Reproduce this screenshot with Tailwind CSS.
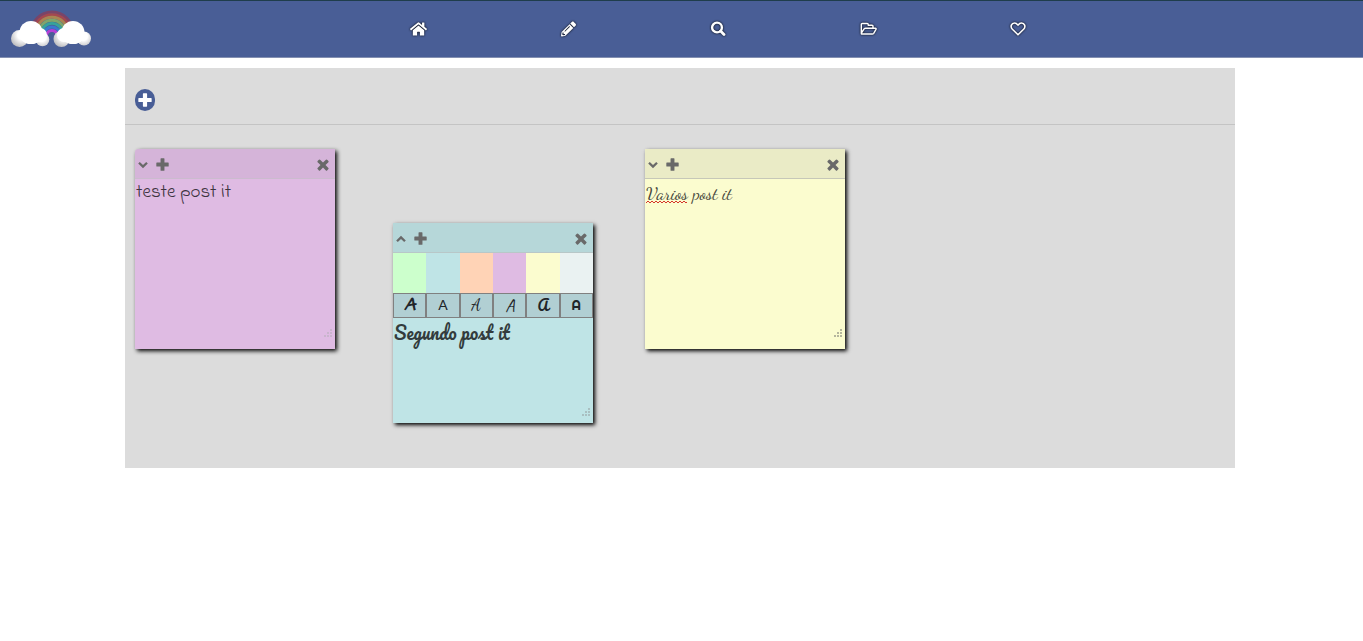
<!DOCTYPE html>
<html lang="pt-BR">
<head>
<meta charset="utf-8">
<meta name="viewport" content="width=device-width, initial-scale=1">
<title>Post it</title>
<script src="https://cdn.jsdelivr.net/npm/@tailwindcss/browser@4"></script>
</head>
<body class="bg-white font-['Roboto',sans-serif] text-[#212529]">
<svg class="hidden" aria-hidden="true">
  <symbol id="plus" viewBox="0 0 12 12"><path d="M4.700.3h2.600q.5 0 .5.500v3.400h3.400q.5 0 .5.500v2.600q0 .5-.5.500H7.800v3.400q0 .5-.5.500H4.700q-.5 0-.5-.5V7.800H.8q-.5 0-.5-.5V4.700q0-.5.500-.5h3.400V.8q0-.5.500-.5z"/></symbol>
  <symbol id="close" viewBox="0 0 12 12"><path d="M3.100.7 6 3.600 8.900.7q.6-.5 1.200 0l1.300 1.300q.5.600 0 1.200L8.500 6l2.900 2.900q.5.600 0 1.200l-1.300 1.300q-.6.500-1.200 0L6 8.500l-2.900 2.900q-.6.500-1.200 0L.6 10.100q-.5-.6 0-1.200L3.500 6 .6 3.200q-.5-.6 0-1.200L1.900.7q.6-.5 1.200 0z"/></symbol>
  <symbol id="down" viewBox="0 0 10 8"><path d="M1 1.700 5 5.600 9 1.700" fill="none" stroke="currentColor" stroke-width="2.300"/></symbol>
  <symbol id="up" viewBox="0 0 10 8"><path d="M1 6.300 5 2.400 9 6.300" fill="none" stroke="currentColor" stroke-width="2.300"/></symbol>
  <symbol id="grip" viewBox="0 0 8 8"><path d="M6 0h2v2H6zM3 3h2v2H3zM6 3h2v2H6zM0 6h2v2H0zM3 6h2v2H3zM6 6h2v2H6z"/></symbol>
</svg>

<header class="flex h-[58px] items-center border-t border-b border-t-[#1f3d4b] border-b-[#8490b1] bg-[#495e96]">
  <a href="#" aria-label="Início" class="ml-[11px] block h-10 w-20 shrink-0">
    <svg class="h-10 w-20" viewBox="0 0 80 40" aria-hidden="true">
      <defs>
        <radialGradient id="cloud" cx=".45" cy=".35" r=".65"><stop offset=".45" stop-color="#fff"/><stop offset="1" stop-color="#cfcfd2"/></radialGradient>
        <radialGradient id="puff" cx=".65" cy=".3" r=".75"><stop offset=".35" stop-color="#fff"/><stop offset="1" stop-color="#b9b9bc"/></radialGradient>
      </defs>
      <g fill="none" stroke-width="2.900">
        <path d="M20 24a21 21 0 0 1 42 0" stroke="#7a4468"/>
        <path d="M22.600 24a18.400 18.400 0 0 1 36.800 0" stroke="#a4484f"/>
        <path d="M25.200 24a15.800 15.800 0 0 1 31.600 0" stroke="#a98553"/>
        <path d="M27.800 24.500a13.200 13.200 0 0 1 26.400 0" stroke="#7fa56b"/>
        <path d="M30.400 25a10.600 10.600 0 0 1 21.200 0" stroke="#36a39b"/>
        <path d="M33 26a8 8 0 0 1 16 0" stroke="#3a78d0"/>
        <path d="M35.500 27a5.500 5.500 0 0 1 11 0" stroke="#b43fd6"/>
      </g>
      <circle cx="8.500" cy="29.500" r="8.500" fill="url(#puff)"/>
      <circle cx="31.500" cy="30.500" r="6.800" fill="url(#cloud)"/>
      <circle cx="29" cy="26" r="7" fill="#fff"/>
      <circle cx="20" cy="23.500" r="11.500" fill="#fff"/>
      <ellipse cx="20" cy="29" rx="10" ry="6" fill="#fff"/>
      <circle cx="50.500" cy="30" r="8" fill="url(#puff)"/>
      <circle cx="73" cy="29.500" r="7" fill="url(#cloud)"/>
      <circle cx="53" cy="26" r="7" fill="#fff"/>
      <circle cx="62" cy="23.500" r="11.500" fill="#fff"/>
      <ellipse cx="62" cy="29" rx="10" ry="6" fill="#fff"/>
    </svg>
  </a>
  <nav class="flex flex-1 justify-center pr-[18px] text-white" aria-label="Principal">
    <a href="#" aria-label="Casa" class="flex w-[150px] justify-center py-4"><svg class="h-4 w-[17px] drop-shadow-[0_0_1px_#000]" viewBox="0 0 576 512" fill="currentColor"><path d="M280.370 148.260L96 300.110V464a16 16 0 0 0 16 16l112.060-.29a16 16 0 0 0 15.920-16V368a16 16 0 0 1 16-16h64a16 16 0 0 1 16 16v95.640a16 16 0 0 0 16 16.050L464 480a16 16 0 0 0 16-16V300L295.670 148.260a12.190 12.190 0 0 0-15.300 0zM571.600 251.470L488 182.560V44.050a12 12 0 0 0-12-12h-56a12 12 0 0 0-12 12v72.610L318.470 43a48 48 0 0 0-61 0L4.340 251.470a12 12 0 0 0-1.600 16.900l25.500 31A12 12 0 0 0 45.150 301l235.220-193.740a12.190 12.190 0 0 1 15.300 0L530.900 301a12 12 0 0 0 16.900-1.600l25.500-31a12 12 0 0 0-1.700-16.930z"/></svg></a>
    <a href="#" aria-label="Editar" class="flex w-[150px] justify-center py-4"><svg class="h-4 w-[15px] drop-shadow-[0_0_1px_#000]" viewBox="0 0 512 512" fill="currentColor"><path d="M497.900 142.100l-46.100 46.100c-4.700 4.700-12.300 4.700-17 0l-111-111c-4.700-4.700-4.700-12.300 0-17l46.100-46.100c18.700-18.700 49.100-18.700 67.900 0l60.100 60.100c18.800 18.700 18.800 49.100 0 67.900zM284.200 99.800L21.600 362.400.4 483.900c-2.900 16.400 11.400 30.600 27.800 27.800l121.500-21.300 262.600-262.600c4.700-4.700 4.700-12.300 0-17l-111-111c-4.800-4.700-12.400-4.700-17.100 0zM124.100 339.900c-5.500-5.500-5.500-14.300 0-19.800l154-154c5.500-5.500 14.300-5.500 19.800 0s5.500 14.300 0 19.800l-154 154c-5.500 5.500-14.300 5.500-19.800 0zM88 424h48v36.300l-64.500 11.300-31.100-31.100L51.700 376H88v48z"/></svg></a>
    <a href="#" aria-label="Pesquisar" class="flex w-[150px] justify-center py-4"><svg class="size-4 drop-shadow-[0_0_1px_#000]" viewBox="0 0 16 16" fill="none" stroke="currentColor"><circle cx="7" cy="6.500" r="4.900" stroke-width="2.400"/><path d="m10.600 10.100 3.400 3.400" stroke-width="2.800" stroke-linecap="round"/></svg></a>
    <a href="#" aria-label="Pastas" class="flex w-[150px] justify-center py-4"><svg class="h-4 w-[17px] drop-shadow-[0_0_1px_#000]" viewBox="0 0 17 16" fill="none" stroke="currentColor" stroke-width="1.400" stroke-linejoin="round"><path d="M13 7V5.300q0-1-1-1H8.200V3.500q0-1-1-1H2.300q-1 0-1 1v9.200M1.400 13h10.900q.9 0 1.400-.7L16 8.400q.5-1.100-.7-1.200H5.500q-.8 0-1.400.7L1.400 12z"/></svg></a>
    <a href="#" aria-label="Favoritos" class="flex w-[150px] justify-center py-4"><svg class="size-4 drop-shadow-[0_0_1px_#000]" viewBox="0 0 16 16" fill="none" stroke="currentColor" stroke-width="1.600" stroke-linejoin="round"><path d="M8 13.800 2.400 8.300C-.1 5.600 1.400 2 4.600 2 6.500 2 7.300 3.200 8 4.100 8.700 3.200 9.500 2 11.400 2c3.200 0 4.700 3.600 2.200 6.300z"/></svg></a>
  </nav>
</header>

<main class="pt-2.5 pr-[3px]">
  <section class="relative mx-auto h-[400px] max-w-[1110px] bg-[#dcdcdc]" aria-label="Quadro">
    <div class="flex h-[57px] items-center border-b border-[#c4c4c4] px-2.5 pt-2">
      <button aria-label="Novo post it" class="flex h-[22px] w-5 items-center justify-center rounded-full bg-[#495e96] text-white"><svg class="size-3.5 fill-current"><use href="#plus"/></svg></button>
    </div>

    <article class="absolute top-[81px] left-2.5 flex h-[200px] w-[200px] flex-col rounded-tl bg-[#dfbbe3] shadow-[2px_2px_4px_#000]">
      <div class="flex h-[30px] shrink-0 items-center rounded-tl border-b border-[#cbbbce] bg-[#d5b4d9] pt-0.5 pr-1.5 pl-[3px] text-[#696969]">
        <button aria-label="Abrir opções"><svg class="h-2 w-2.5"><use href="#down"/></svg></button>
        <button aria-label="Adicionar" class="ml-2"><svg class="size-[13px] fill-current"><use href="#plus"/></svg></button>
        <button aria-label="Fechar" class="ml-auto"><svg class="size-3 fill-current"><use href="#close"/></svg></button>
      </div>
      <textarea aria-label="Nota" spellcheck="false" class="block w-full flex-1 resize-none overflow-hidden pt-0.5 pl-px font-['Indie_Flower','Lato',sans-serif] text-[19px] leading-6 text-[#3d3440] outline-none">teste post it</textarea>
      <svg class="absolute right-[3px] bottom-3 size-2 fill-[#c9b4cd]" aria-hidden="true"><use href="#grip"/></svg>
    </article>

    <article class="absolute top-[155px] left-[268px] flex h-[200px] w-[200px] flex-col bg-[#bfe4e6] shadow-[2px_2px_4px_#000]">
      <div class="flex h-[30px] shrink-0 items-center border-b border-[#b8c7c8] bg-[#b6d7d9] pt-0.5 pr-1.5 pl-[3px] text-[#696969]">
        <button aria-label="Fechar opções"><svg class="h-2 w-2.5"><use href="#up"/></svg></button>
        <button aria-label="Adicionar" class="ml-2"><svg class="size-[13px] fill-current"><use href="#plus"/></svg></button>
        <button aria-label="Fechar" class="ml-auto"><svg class="size-3 fill-current"><use href="#close"/></svg></button>
      </div>
      <div class="grid h-10 shrink-0 grid-cols-6">
        <button aria-label="Verde" class="bg-[#ccffcc]"></button>
        <button aria-label="Azul" class="bg-[#bfe4e6]"></button>
        <button aria-label="Laranja" class="bg-[#ffd3b6]"></button>
        <button aria-label="Lilás" class="bg-[#dfbbe3]"></button>
        <button aria-label="Amarelo" class="bg-[#fbfccf]"></button>
        <button aria-label="Branco" class="bg-[#eaf2f2]"></button>
      </div>
      <div class="grid h-[25px] shrink-0 grid-cols-6 bg-[#b1cfd3] text-[#212529]">
        <button class="border border-[#808080] pb-0.5 font-['Permanent_Marker','Architects_Daughter',cursive] text-[18px] leading-5 font-black italic">A</button>
        <button class="border border-[#808080] pb-0.5 font-['Lato',sans-serif] text-sm leading-5">A</button>
        <button class="border border-[#808080] pb-0.5 font-['Dancing_Script','Liberation_Serif',serif] text-base leading-5">A</button>
        <button class="border border-[#808080] pb-0.5 font-['Caveat','Open_Sans',sans-serif] text-[18px] leading-5">A</button>
        <button class="border border-[#808080] pb-0.5 font-['Pacifico','Lato',cursive] text-sm leading-5">A</button>
        <button class="border border-[#808080] pb-0.5 font-['Righteous','Roboto',sans-serif] text-sm leading-5">A</button>
      </div>
      <textarea aria-label="Nota" spellcheck="false" class="block w-full flex-1 resize-none overflow-hidden pt-[3px] pl-px font-['Pacifico','Lato',sans-serif] text-[18px] leading-6 text-[#333c3d] outline-none">Segundo post it</textarea>
      <svg class="absolute right-[3px] bottom-[7px] size-2 fill-[#a9bfc1]" aria-hidden="true"><use href="#grip"/></svg>
    </article>

    <article class="absolute top-[81px] left-[520px] flex h-[200px] w-[200px] flex-col bg-[#fbfccf] shadow-[2px_2px_4px_#000]">
      <div class="flex h-[30px] shrink-0 items-center border-b border-[#c6c7b8] bg-[#eaebc6] pt-0.5 pr-1.5 pl-[3px] text-[#696969]">
        <button aria-label="Abrir opções"><svg class="h-2 w-2.5"><use href="#down"/></svg></button>
        <button aria-label="Adicionar" class="ml-2"><svg class="size-[13px] fill-current"><use href="#plus"/></svg></button>
        <button aria-label="Fechar" class="ml-auto"><svg class="size-3 fill-current"><use href="#close"/></svg></button>
      </div>
      <textarea aria-label="Nota" spellcheck="false" class="block w-full flex-1 resize-none overflow-hidden pt-0.5 pl-px font-['Dancing_Script','Liberation_Serif',serif] text-[18px] leading-6 text-[#44453a] outline-none">Varios post it</textarea>
      <svg class="absolute top-[51px] left-px h-1 w-[43px]" viewBox="0 0 43 4" fill="none" stroke="#d5342b" aria-hidden="true"><path d="m0 3 2-2 2 2 2-2 2 2 2-2 2 2 2-2 2 2 2-2 2 2 2-2 2 2 2-2 2 2 2-2 2 2 2-2 2 2 2-2 2 2 1-1"/></svg>
      <svg class="absolute right-[3px] bottom-3 size-2 fill-[#b5b69d]" aria-hidden="true"><use href="#grip"/></svg>
    </article>
  </section>
</main>
</body>
</html>
